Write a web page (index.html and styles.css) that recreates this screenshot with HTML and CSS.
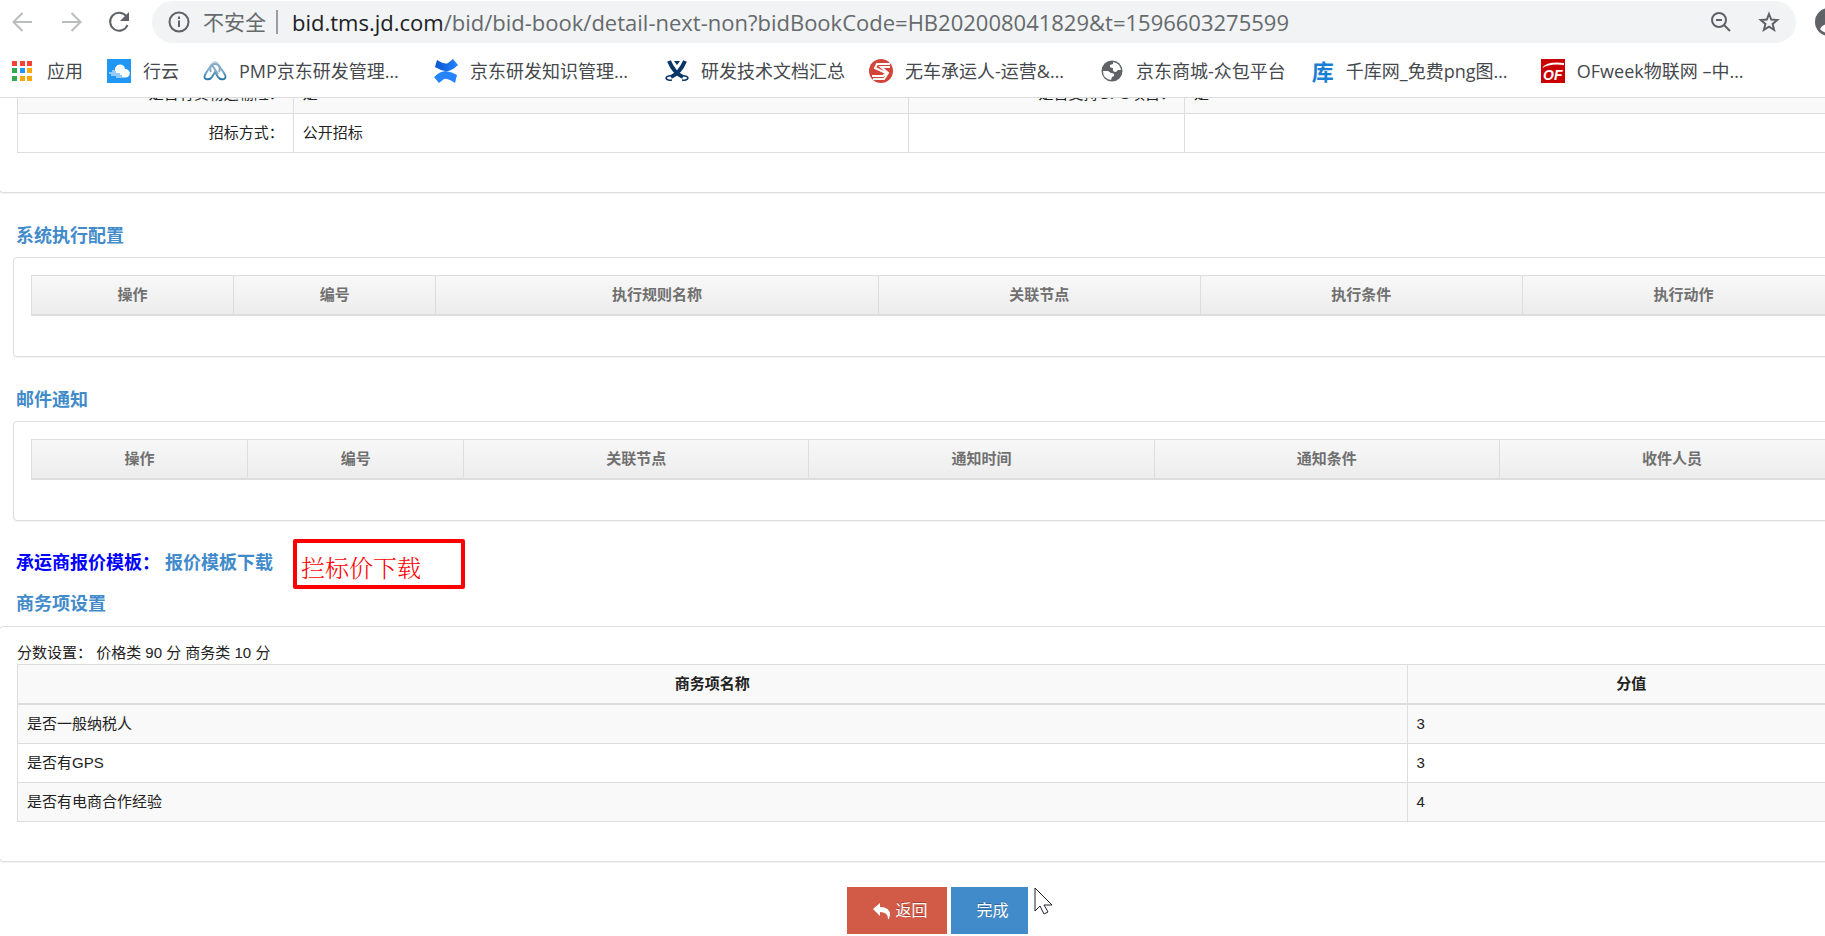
FILE: index.html
```html
<!DOCTYPE html>
<html lang="zh-CN">
<head>
<meta charset="utf-8">
<title>招标详情</title>
<link rel="stylesheet" href="styles.css">
</head>
<body>
<header class="browser">
  <div class="toolbar">
    <nav class="nav-buttons">
      <button class="icon-button" aria-label="后退"><svg class="nav-icon muted" viewBox="0 0 22 22"><path d="M20 11H2M10.500 2L1.500 11l9 9"/></svg></button>
      <button class="icon-button" aria-label="前进"><svg class="nav-icon muted" viewBox="0 0 22 22"><path d="M2 11h18M11.500 2l9 9-9 9"/></svg></button>
      <button class="icon-button" aria-label="刷新"><svg class="nav-icon" viewBox="0 0 22 22"><path d="M18.500 5.500A9 9 0 1 0 19.500 14"/><path class="solid" d="M21 1v9h-9z"/></svg></button>
    </nav>
    <div class="address">
      <svg class="info-icon" viewBox="0 0 22 22"><circle cx="11" cy="11" r="9.500"/><path d="M11 9.500v6.500M11 5.500v2.500"/></svg>
      <span class="insecure">不安全</span>
      <span class="address-rule"></span>
      <span class="url"><span class="host">bid.tms.jd.com</span>/bid/bid-book/detail-next-non?bidBookCode=HB202008041829&amp;t=1596603275599</span>
      <button class="icon-button" aria-label="缩放"><svg class="bar-icon" viewBox="0 0 22 22"><circle cx="9" cy="9" r="7"/><path d="M6 9h6M14 14l6 6"/></svg></button>
      <button class="icon-button" aria-label="收藏"><svg class="bar-icon" viewBox="0 0 22 22"><path d="M11 3l2.200 5.600 6 .4-4.600 3.900 1.500 5.900L11 15.600l-5.100 3.200 1.500-5.900L2.800 9l6-.4z"/></svg></button>
    </div>
    <svg class="avatar" viewBox="0 0 28 28"><circle cx="14" cy="14" r="14"/><path d="M5 21q2-5 9-5t9 5q-3 4-9 4t-9-4z" fill="#fff"/><circle cx="16" cy="10" r="4" fill="#fff"/></svg>
  </div>
  <nav class="bookmarks">
    <a class="bookmark" href="#"><svg class="favicon" viewBox="0 0 24 24"><path fill="#f44336" d="M1 2h5v5H1zM9 2h5v5H9zM16 2h5v5h-5z"/><path fill="#34a853" d="M1 9h5v5H1zM1 17h5v5H1z"/><path fill="#2196f3" d="M9 9h5v5H9z"/><path fill="#fba90a" d="M16 9h5v5h-5zM9 17h5v5H9zM16 17h5v5h-5z"/></svg><span>应用</span></a>
    <a class="bookmark" href="#"><svg class="favicon" viewBox="0 0 24 24"><path fill="#2196f3" d="M0 0h24v24H0z"/><path fill="#fff" d="M8 11a5 5 0 0 1 10-1 4 4 0 0 1 1 8.500H9v-1h6v-1H4v-1h9v-1H2v-1h7v-1H5v-1h3z"/></svg><span>行云</span></a>
    <a class="bookmark" href="#"><svg class="favicon" viewBox="0 0 24 24"><defs><linearGradient id="peak" x2="0" y2="1"><stop stop-color="#c9d9e4"/><stop offset="1" stop-color="#2878ad"/></linearGradient></defs><path d="M3 20Q0 19 3 14L9 5q3-4 6 0l6 9q3 5 0 6-4 1-6-2l-3-5-3 5q-2 3-6 2z" fill="none" stroke="url(#peak)" stroke-width="2"/><path d="M8 13q-2-4 1-7 3-2 6 0 3 3 1 7M9 6l6 9" fill="none" stroke="#83abc5" stroke-width="2"/></svg><span class="clipped">PMP京东研发管理…</span></a>
    <a class="bookmark" href="#"><svg class="favicon" viewBox="0 0 24 24"><defs><linearGradient id="wave"><stop stop-color="#0754d1"/><stop offset="1" stop-color="#2684ff"/></linearGradient></defs><path fill="url(#wave)" d="M3 1q8 5 11 3l5-4 5 6q-7 7-13 6-5-1-10-4z"/><path fill="#2684ff" d="M21 24q-8-5-11-4l-5 4-5-6q6-6 12-6 6 1 11 4z"/></svg><span class="clipped">京东研发知识管理…</span></a>
    <a class="bookmark" href="#"><svg class="favicon" viewBox="0 0 24 24"><path d="M4 2q5 12 14 16M20 2q-5 12-14 16" fill="none" stroke="#0a3567" stroke-width="4"/><path fill="#0a3567" d="M9 2h6l-3 4z"/><path d="M9 17q-7-1-8 2 1 3 6 2M15 17q7-1 8 2-1 3-6 2" fill="none" stroke="#0a3567" stroke-width="1.500"/></svg><span>研发技术文档汇总</span></a>
    <a class="bookmark" href="#"><svg class="favicon" viewBox="0 0 24 24"><circle cx="12" cy="12" r="12" fill="#d1453b"/><path d="M21 5H8L6 9l11 5-3 3H3M21 8h-9l7 6-4 6H4" fill="none" stroke="#fff" stroke-width="2"/></svg><span class="clipped">无车承运人-运营&amp;…</span></a>
    <a class="bookmark" href="#"><svg class="favicon" viewBox="0 0 24 24"><circle cx="12" cy="12" r="10.500" fill="#5f6368"/><path fill="#fff" d="M13 3q7 1 8 8h-3l-2 2q-4 0-3-4-4 0-3-3l3-1zM3 12h5l3 2q4 0 3 3l-2 1-1 3q-8-1-8-9z"/></svg><span>京东商城-众包平台</span></a>
    <a class="bookmark" href="#"><span class="favicon glyph-ku">库</span><span class="clipped">千库网_免费png图…</span></a>
    <a class="bookmark" href="#"><span class="favicon glyph-of">OF<svg class="of-arc" viewBox="0 0 24 9"><path d="M1 8Q6 1 23 3v2Q9 3 1 8z"/></svg></span><span class="clipped">OFweek物联网 –中…</span></a>
  </nav>
</header>

<main class="page">
  <div class="canvas">
    <section class="panel panel-scrolled">
      <table class="grid striped details">
        <colgroup><col class="w-label"><col class="w-value"><col class="w-label"><col></colgroup>
        <tbody>
          <tr><th scope="row">是否有货物运输险：</th><td>是</td><th scope="row">是否支持GPS项目：</th><td>是</td></tr>
          <tr><th scope="row">招标方式：</th><td>公开招标</td><th></th><td></td></tr>
        </tbody>
      </table>
    </section>

    <h2 class="title title-spaced">系统执行配置</h2>
    <section class="panel panel-inset">
      <table class="grid shaded">
        <colgroup><col class="w-exec-s"><col class="w-exec-s"><col class="w-exec-l"><col class="w-exec-m"><col class="w-exec-m"><col></colgroup>
        <thead><tr><th>操作</th><th>编号</th><th>执行规则名称</th><th>关联节点</th><th>执行条件</th><th>执行动作</th></tr></thead>
      </table>
    </section>

    <h2 class="title title-spaced">邮件通知</h2>
    <section class="panel panel-inset">
      <table class="grid shaded">
        <colgroup><col class="w-mail-s"><col class="w-mail-s"><col class="w-mail-m"><col class="w-mail-m"><col class="w-mail-m"><col></colgroup>
        <thead><tr><th>操作</th><th>编号</th><th>关联节点</th><th>通知时间</th><th>通知条件</th><th>收件人员</th></tr></thead>
      </table>
    </section>

    <div class="template-row">
      <h2 class="title"><span class="template-label">承运商报价模板：</span><a class="template-link" href="#">报价模板下载</a></h2>
      <div class="callout">拦标价下载</div>
    </div>

    <h2 class="title title-business">商务项设置</h2>
    <section class="panel panel-business">
      <p class="score">分数设置： 价格类 90 分 商务类 10 分</p>
      <table class="grid striped scores">
        <colgroup><col class="w-item"><col></colgroup>
        <thead><tr><th>商务项名称</th><th>分值</th></tr></thead>
        <tbody>
          <tr><td>是否一般纳税人</td><td>3</td></tr>
          <tr><td>是否有GPS</td><td>3</td></tr>
          <tr><td>是否有电商合作经验</td><td>4</td></tr>
        </tbody>
      </table>
    </section>

    <div class="actions">
      <button class="action back"><svg class="reply" viewBox="0 0 18 16"><path d="M7 0v4q10 0 10 8l-1 4h-1q0-7-8-7v4L0 6z"/></svg>返回</button>
      <button class="action done">完成</button>
      <svg class="pointer" viewBox="0 0 20 28"><path d="M1 1v23l5-5 4 8 4-2-4-7h8z"/></svg>
    </div>
  </div>
</main>
</body>
</html>
```
FILE: styles.css
```css
* {
  box-sizing: border-box;
}

body {
  margin: 0;
  height: 100vh;
  display: flex;
  flex-direction: column;
  overflow: hidden;
  background: #fff;
  color: #222;
  font: 15px/22px "Liberation Sans", "Noto Sans CJK SC", sans-serif;
}

button {
  font: inherit;
  border: 0;
  padding: 0;
  cursor: pointer;
}

a {
  color: inherit;
  text-decoration: none;
}

/* Browser chrome */
.browser {
  flex: none;
  border-bottom: 1px solid #dadce0;
  font-family: "Open Sans", "Noto Sans CJK SC", sans-serif;
}

.toolbar {
  display: flex;
  align-items: center;
  padding-top: 1px;
  overflow: hidden;
}

.nav-buttons {
  display: flex;
  gap: 26px;
  width: 152px;
  padding-left: 12px;
  flex: none;
}

.icon-button {
  background: none;
  display: flex;
}

.nav-icon,
.info-icon,
.bar-icon {
  width: 22px;
  height: 22px;
  fill: none;
  stroke: #5f6368;
  stroke-width: 2;
  flex: none;
}

.muted {
  stroke: #babcbe;
}

.solid {
  fill: #5f6368;
  stroke: none;
}

.address {
  flex: 1;
  display: flex;
  align-items: center;
  height: 42px;
  padding: 0 16px;
  border-radius: 21px;
  background: #f1f3f4;
  font-size: 22px;
  line-height: 28px;
  color: #666a6d;
  white-space: nowrap;
}

.insecure {
  margin-left: 13px;
  font-size: 21px;
}

.address-rule {
  width: 2px;
  height: 24px;
  margin: 0 14px 0 10px;
  background: #9b9ea1;
}

.url {
  flex: 1;
}

.host {
  color: #202124;
}

.address .icon-button + .icon-button {
  margin-left: 26px;
}

.avatar {
  width: 28px;
  height: 28px;
  flex: none;
  margin: 0 -18px 0 19px;
  fill: #5f6368;
}

.bookmarks {
  display: flex;
  gap: 24px;
  height: 54px;
  padding: 1px 11px 0;
  align-items: center;
  overflow: hidden;
}

.bookmark {
  display: flex;
  align-items: center;
  gap: 12px;
  color: #45484c;
  font-size: 18px;
  line-height: 24px;
  white-space: nowrap;
  flex: none;
}

.clipped {
  width: 171px;
}

.favicon {
  width: 24px;
  height: 24px;
  flex: none;
}

.glyph-ku {
  color: #1b7fd4;
  font-size: 22px;
  font-weight: 700;
  text-align: right;
}

.glyph-of {
  position: relative;
  background: #c80000;
  color: #fff;
  font: italic 700 14px/16px "Liberation Sans", sans-serif;
  text-align: center;
  padding-top: 8px;
}

.of-arc {
  position: absolute;
  top: 1px;
  left: 0;
  width: 24px;
  height: 9px;
  fill: #fff;
}

/* Page: the canvas is wider than the window and runs off both sides */
.page {
  flex: 1;
  min-height: 0;
  overflow: hidden;
}

.canvas {
  margin: 0 -49px 0 -1px;
}

.panel {
  border: 1px solid #ddd;
  border-radius: 4px;
  box-shadow: 0 1px 1px rgba(0, 0, 0, 0.05);
}

.panel-scrolled {
  margin-top: -24px;
  padding: 0 17px 39px;
  border-top: 0;
}

.panel-inset {
  margin: 0 11px 0 14px;
  padding: 17px 17px 40px;
}

.panel-business {
  padding: 15px 17px 39px;
}

.grid {
  width: 100%;
  table-layout: fixed;
  border-collapse: collapse;
}

.grid th,
.grid td {
  height: 39px;
  padding: 8px 9px;
  border: 1px solid #ddd;
  text-align: left;
}

.grid thead th {
  border-bottom-width: 2px;
  text-align: center;
}

.striped tbody tr:nth-child(odd),
.scores thead tr {
  background: #f9f9f9;
}

.details tbody th {
  font-weight: 400;
  text-align: right;
}

.shaded thead tr {
  background: linear-gradient(#f8f8f8, #ececec);
  color: #707070;
}

.w-label { width: 15%; }
.w-value { width: 33.5%; }
.w-exec-s { width: 11.15%; }
.w-exec-m { width: 17.77%; }
.w-exec-l { width: 24.4%; }
.w-mail-s { width: 11.92%; }
.w-mail-m { width: 19.04%; }
.w-item { width: 75.6%; }

.title {
  margin: 0;
  padding-left: 17px;
  color: #428bca;
  font-size: 18px;
  line-height: 26px;
  font-weight: 700;
}

.title-spaced {
  padding-top: 30px;
  padding-bottom: 8px;
}

.template-row {
  display: flex;
  align-items: center;
  gap: 20px;
  padding-top: 18px;
}

.template-row .title {
  padding-bottom: 2px;
}

.template-label {
  color: #00f;
  margin-right: 5px;
}

.callout {
  width: 172px;
  height: 50px;
  padding: 9px 4px 0;
  border: 4px solid #f00;
  border-radius: 2px;
  color: #f00;
  font: 300 24px/30px SimSun, "Noto Serif CJK SC", "Noto Sans CJK SC", serif;
}

.title-business {
  padding-top: 2px;
  padding-bottom: 9px;
}

.score {
  margin: 0;
}

.actions {
  display: flex;
  justify-content: center;
  gap: 4px;
  padding: 25px 0 0 28px;
}

.action {
  height: 47px;
  color: #fff;
  font-size: 16px;
  line-height: 24px;
  text-shadow: 0 -1px 0 rgba(0, 0, 0, 0.25);
}

.back {
  display: flex;
  align-items: center;
  gap: 4px;
  padding: 0 19px 0 26px;
  background: #d15b47;
}

.done {
  padding: 0 19px 0 26px;
  background: #428bca;
}

.reply {
  width: 18px;
  height: 16px;
  fill: #fff;
}

.pointer {
  width: 20px;
  height: 28px;
  margin-left: 2px;
  fill: #fff;
  stroke: #223;
  stroke-width: 1;
}
```
